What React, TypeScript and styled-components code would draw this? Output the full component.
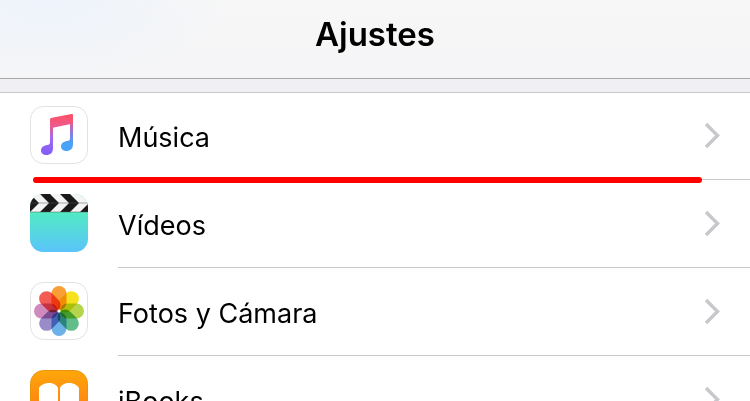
import React from "react";
import styled, { createGlobalStyle } from "styled-components";

const GlobalStyle = createGlobalStyle`
  * { box-sizing: border-box; }
  body {
    margin: 0;
    background: #fff;
    color: #000;
    font-family: Inter, "Liberation Sans", sans-serif;
  }
`;

const Page = styled.main`
  height: 100vh;
  overflow: hidden;
`;

const Header = styled.header`
  display: flex;
  justify-content: center;
  padding: 14px 16px 24px;
  border-bottom: 1px solid #a7a7aa;
  background:
    radial-gradient(ellipse 180px 80px at 50px 0, #edf3fb, transparent),
    linear-gradient(#f7f7f7, #f5f5f7);
`;

const Title = styled.h1`
  margin: 0;
  font-size: 33px;
  line-height: 40px;
  font-weight: 600;
`;

const Spacer = styled.div`
  height: 14px;
  background: #efeff4;
  border-bottom: 1px solid #c8c7cc;
`;

const List = styled.ul`
  margin: 0;
  padding: 0;
  list-style: none;
`;

const Item = styled.li`
  position: relative;
`;

const RowLink = styled.a<{ $first: boolean }>`
  display: flex;
  gap: 30px;
  height: ${({ $first }) => ($first ? 87 : 88)}px;
  padding-left: 30px;
  color: inherit;
  text-decoration: none;

  > svg {
    margin-top: ${({ $first }) => ($first ? 13 : 14)}px;
  }
`;

const AppIcon = styled.svg`
  flex: none;
  width: 58px;
  height: 58px;
`;

const RowBody = styled.span`
  flex: 1;
  display: flex;
  align-items: center;
  justify-content: space-between;
  padding-right: 30px;
  border-bottom: 1px solid #c8c7cc;
`;

const Label = styled.span`
  padding-top: 4px;
  font-size: 27px;
  line-height: 36px;
`;

const Chevron = styled.svg`
  width: 16px;
  height: 28px;
  fill: none;
  stroke: #c7c7cc;
  stroke-width: 3.4;
`;

const Underline = styled.span`
  position: absolute;
  left: 33px;
  right: 48px;
  bottom: -3px;
  height: 6px;
  border-radius: 3px;
  background: #f00;
`;

const Tile = () => (
  <rect x="0.5" y="0.5" width="57" height="57" rx="13" fill="#fff" stroke="#e2e2e4" />
);

const MusicIcon = () => (
  <AppIcon viewBox="0 0 58 58" aria-hidden="true">
    <defs>
      <linearGradient id="note" gradientUnits="userSpaceOnUse" x1="30" y1="8" x2="30" y2="50">
        <stop offset="0" stopColor="#ff4f63" />
        <stop offset="0.28" stopColor="#ee5a8c" />
        <stop offset="0.55" stopColor="#a568e8" />
        <stop offset="1" stopColor="#7d5cff" />
      </linearGradient>
      <linearGradient id="noteRight" gradientUnits="userSpaceOnUse" x1="38" y1="15" x2="38" y2="45">
        <stop offset="0" stopColor="#ee5a8c" />
        <stop offset="0.4" stopColor="#8c7ae0" />
        <stop offset="0.75" stopColor="#48a2f8" />
        <stop offset="1" stopColor="#48a6fa" />
      </linearGradient>
    </defs>
    <Tile />
    <path
      fill="url(#noteRight)"
      d="M40 15H43V38C43 43 40 45 36.500 45C33.200 45 31 43 31 40.500C31 37.500 33.500 35.500 37 35C39.200 34.700 40 34 40 32Z"
    />
    <path
      fill="url(#note)"
      d="M20 14C20 12.500 20.500 12 22 11.700L41.500 8C42.500 7.800 43 8.200 43 9.200V17.500L23 21.800V42C23 47 20 49 16.500 49C13.200 49 11 47 11 44.500C11 41.500 13.500 39.500 17 39C19.200 38.700 20 38 20 36Z"
    />
  </AppIcon>
);

const VideosIcon = () => (
  <AppIcon viewBox="0 0 58 58" aria-hidden="true">
    <defs>
      <linearGradient id="screen" x1="0" y1="0" x2="0" y2="1">
        <stop offset="0.3" stopColor="#52ebc2" />
        <stop offset="1" stopColor="#5ac4fb" />
      </linearGradient>
      <clipPath id="videoTile">
        <rect width="58" height="58" rx="13" />
      </clipPath>
    </defs>
    <g clipPath="url(#videoTile)">
      <rect width="58" height="58" fill="url(#screen)" />
      <rect width="58" height="18" fill="#f4f4f4" />
      <path
        fill="#1a1a1a"
        d="M-10 0H0L9 9L0 18H-10ZM10 0H20L29 9L20 18H10L19 9ZM30 0H40L49 9L40 18H30L39 9ZM58 10V18H50Z"
      />
      <path d="M0 9H58M0 18H58" stroke="#555" strokeWidth="0.500" />
    </g>
  </AppIcon>
);

const petals = ["#fa9f35", "#f5e21c", "#b4d54c", "#62bd8b", "#6cb2e6", "#9a8cc8", "#cf8bbd", "#f45b55"];

const PetalGroup = styled.g`
  isolation: isolate;

  rect {
    mix-blend-mode: multiply;
  }
`;

const PhotosIcon = () => (
  <AppIcon viewBox="0 0 58 58" aria-hidden="true">
    <Tile />
    <PetalGroup>
      {petals.map((color, i) => (
        <rect
          key={color}
          x="21.500"
          y="4"
          width="15"
          height="24"
          rx="7.500"
          fill={color}
          transform={`rotate(${i * 45} 29 29)`}
        />
      ))}
    </PetalGroup>
    <circle cx="29" cy="29" r="1.500" fill="#fff" />
  </AppIcon>
);

const BooksIcon = () => (
  <AppIcon viewBox="0 0 58 58" aria-hidden="true">
    <defs>
      <linearGradient id="cover" x1="0" y1="0" x2="0" y2="1">
        <stop offset="0" stopColor="#ffa70a" />
        <stop offset="1" stopColor="#ff6f16" />
      </linearGradient>
    </defs>
    <rect x="0.5" y="0.5" width="57" height="57" rx="13" fill="url(#cover)" stroke="#e8940f" />
    <path
      fill="#fff"
      d="M9 18C11 14.500 15 13 19 13C23 13 27 15 28 18V46C25 42 14 41 9 45ZM49 18C47 14.500 43 13 39 13C35 13 31 15 30 18V46C33 42 44 41 49 45Z"
    />
  </AppIcon>
);

const entries = [
  { label: "Música", Icon: MusicIcon, marked: true },
  { label: "Vídeos", Icon: VideosIcon },
  { label: "Fotos y Cámara", Icon: PhotosIcon },
  { label: "iBooks", Icon: BooksIcon },
];

export default function App() {
  return (
    <>
      <GlobalStyle />
      <Page>
        <Header>
          <Title>Ajustes</Title>
        </Header>
        <Spacer />
        <List>
          {entries.map(({ label, Icon, marked }, index) => (
            <Item key={label}>
              <RowLink href="#" $first={index === 0}>
                <Icon />
                <RowBody>
                  <Label>{label}</Label>
                  <Chevron viewBox="0 0 16 28" aria-hidden="true">
                    <path d="M2 2L13.500 13.500L2 25" />
                  </Chevron>
                </RowBody>
              </RowLink>
              {marked && <Underline />}
            </Item>
          ))}
        </List>
      </Page>
    </>
  );
}
